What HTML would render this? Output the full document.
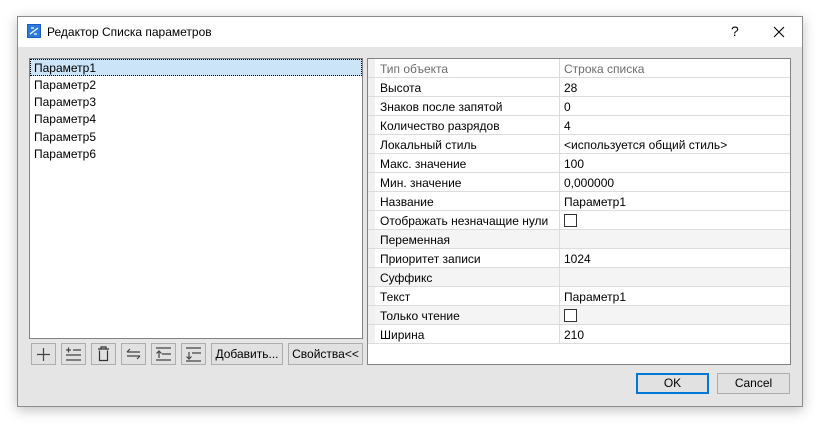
<!DOCTYPE html>
<html><head><meta charset="utf-8"><style>
*{box-sizing:border-box;margin:0;padding:0}
body{width:824px;height:429px;background:#fff;font-family:"Segoe UI","Liberation Sans",sans-serif;font-size:12px;color:#000;position:relative;overflow:hidden}
.win{position:absolute;left:17px;top:16px;width:786px;height:391px;border:1px solid #8c8c8c;background:#e5e5e5;box-shadow:0 3px 12px rgba(0,0,0,.25)}
.title{position:absolute;left:0;top:0;width:784px;height:30px;background:#fff}
.title .t{position:absolute;left:29px;top:8px;font-size:12px}
.ico{position:absolute;left:9px;top:7px;width:14px;height:14px;background:#2d7ae0;border:1px solid #1a5fc0}
.abs{position:absolute}
.list{left:11px;top:41px;width:334px;height:281px;background:#fff;border:1px solid #828282}
.list div{height:17px;line-height:19px;padding-left:4px}
.list div+div{height:17.2px}
.sel{background:#cce4f7;outline:1px dotted #000;outline-offset:-1px}
.grid{left:349px;top:41px;width:424px;height:307px;background:#fff;border:1px solid #828282}
.row{height:19px;line-height:20px;border-bottom:1px solid #dcdcdc;display:flex;background:#fff}
.row .a{width:192px;padding-left:12px;border-right:1px solid #dcdcdc;background:linear-gradient(90deg,#f0f0f0 0,#f0f0f0 7px,transparent 7px)}
.row .b{padding-left:4px;flex:1}
.g{background:#f4f4f4}
.hd{color:#6d6d6d}
.cb{display:inline-block;width:13px;height:13px;border:1px solid #333;background:#fff;vertical-align:-2px}
.btn{position:absolute;top:326px;height:22px;border:1px solid #adadad;background:#e1e1e1;text-align:center;line-height:20px}
.ib{width:25px}
</style></head><body>
<div class="win">
 <div class="title"><div class="ico"><svg width="12" height="12" viewBox="0 0 12 12" style="display:block"><path d="M2 9 L10 3 M3 3h3M6 9h3" stroke="#fff" stroke-width="1.2" fill="none"/></svg></div><div class="t">Редактор Списка параметров</div>
 <div class="abs" style="left:713px;top:6px;font-size:14px">?</div>
 <svg class="abs" style="left:755px;top:9px" width="12" height="12"><path d="M1 1L11 11M11 1L1 11" stroke="#000" stroke-width="1.1"/></svg></div>
 <div class="abs list"><div class="sel">Параметр1</div><div>Параметр2</div><div>Параметр3</div><div>Параметр4</div><div>Параметр5</div><div>Параметр6</div></div>
 <div class="abs grid">
  <div class="row hd"><div class="a">Тип объекта</div><div class="b">Строка списка</div></div>
  <div class="row"><div class="a">Высота</div><div class="b">28</div></div>
  <div class="row"><div class="a">Знаков после запятой</div><div class="b">0</div></div>
  <div class="row"><div class="a">Количество разрядов</div><div class="b">4</div></div>
  <div class="row"><div class="a">Локальный стиль</div><div class="b">&lt;используется общий стиль&gt;</div></div>
  <div class="row"><div class="a">Макс. значение</div><div class="b">100</div></div>
  <div class="row"><div class="a">Мин. значение</div><div class="b">0,000000</div></div>
  <div class="row"><div class="a">Название</div><div class="b">Параметр1</div></div>
  <div class="row"><div class="a">Отображать незначащие нули</div><div class="b"><span class="cb"></span></div></div>
  <div class="row g"><div class="a">Переменная</div><div class="b"></div></div>
  <div class="row"><div class="a">Приоритет записи</div><div class="b">1024</div></div>
  <div class="row g"><div class="a">Суффикс</div><div class="b"></div></div>
  <div class="row"><div class="a">Текст</div><div class="b">Параметр1</div></div>
  <div class="row g"><div class="a">Только чтение</div><div class="b"><span class="cb"></span></div></div>
  <div class="row"><div class="a">Ширина</div><div class="b">210</div></div>
 </div>
 <div class="btn ib" style="left:13px"><svg width="23" height="20"><path d="M11.5 4v13M5 10.5h13" stroke="#444" stroke-width="1.2"/></svg></div>
 <div class="btn ib" style="left:43px"><svg width="23" height="20"><path d="M4 6h5M6.5 3.5v5M11 6h8M4 11h15M4 16h15" stroke="#444" stroke-width="1.2"/></svg></div>
 <div class="btn ib" style="left:73px"><svg width="23" height="20"><path d="M6 5h11M9 5V3h5v2M7.5 6.5v10h8v-10" stroke="#333" stroke-width="1.2" fill="none"/></svg></div>
 <div class="btn ib" style="left:103px"><svg width="23" height="20"><path d="M5 8h13M5 8l3-3M5 12h13M18 12l-3 3" stroke="#444" stroke-width="1.2" fill="none"/></svg></div>
 <div class="btn ib" style="left:133px"><svg width="23" height="20"><path d="M4 4h15M7 14V7M4.5 9.5L7 7l2.5 2.5M10 10h9M4 16h15" stroke="#444" stroke-width="1.2" fill="none"/></svg></div>
 <div class="btn ib" style="left:163px"><svg width="23" height="20"><path d="M4 4h15M10 9h9M7 8v7M4.5 12.5L7 15l2.5-2.5M4 17h15" stroke="#444" stroke-width="1.2" fill="none"/></svg></div>
 <div class="btn" style="left:193px;width:72px">Добавить...</div>
 <div class="btn" style="left:270px;width:75px">Свойства&lt;&lt;</div>
 <div class="btn" style="left:618px;top:356px;width:73px;height:21px;border:2px solid #0078d7;line-height:17px">OK</div>
 <div class="btn" style="left:699px;top:356px;width:73px;height:21px;line-height:19px">Cancel</div>
</div>
</body></html>
